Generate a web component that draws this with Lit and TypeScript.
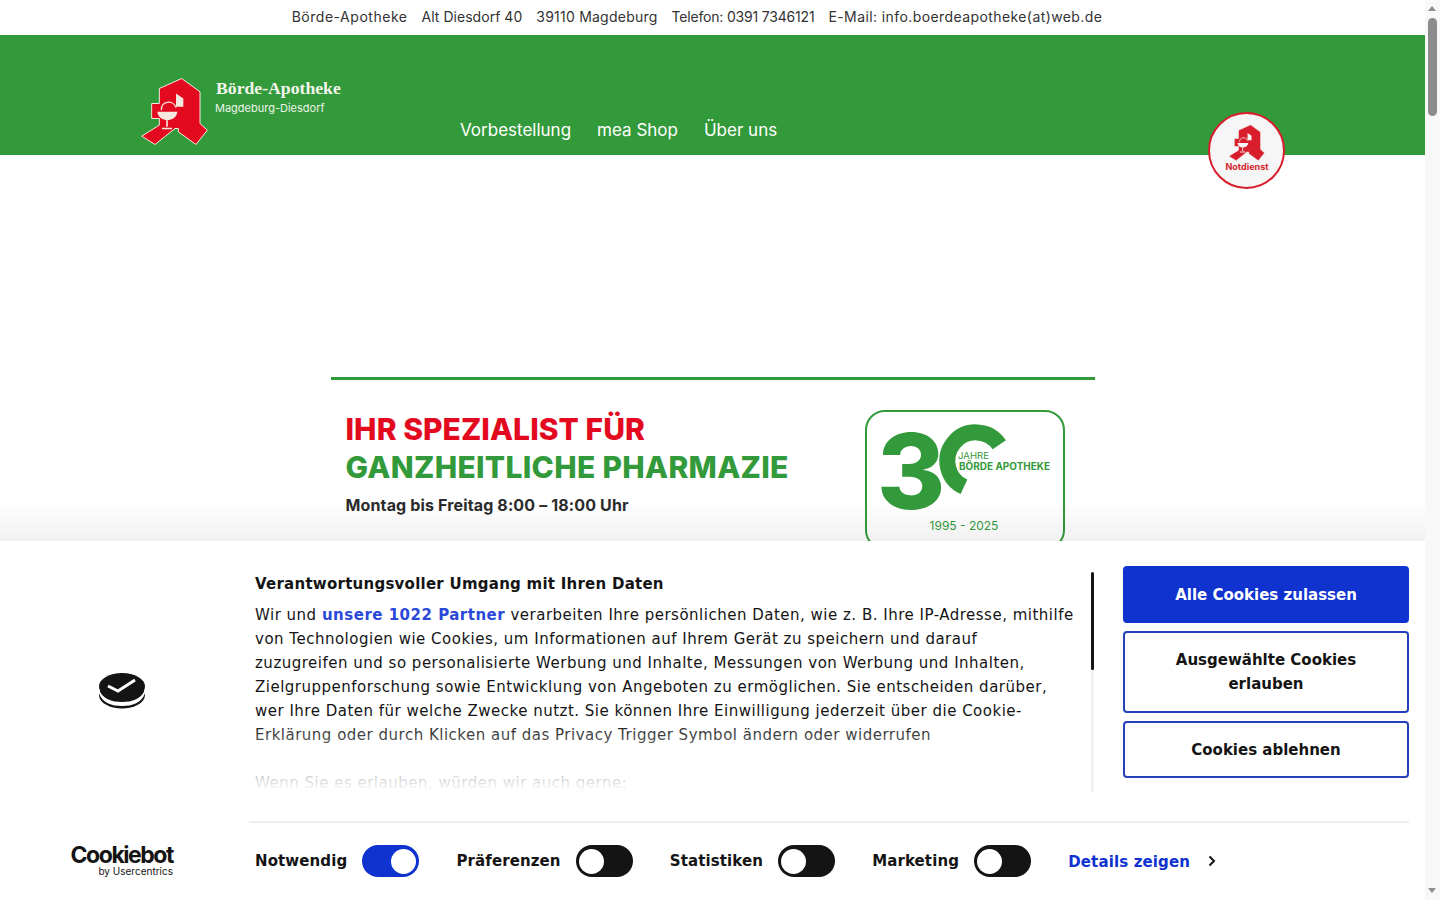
import { LitElement, html, css, svg } from "lit";
import { customElement } from "lit/decorators.js";

const aMark = (cross: string, edge: string) => svg`
  <path d="M185 55 L240 95 L240 190 L262 210 L228 253 L175 215 L175 205 L165 205 L105 253 L65 228 L118 195 L118 175 L95 175 L95 130 L118 130 L118 85 Z" fill="${cross}" stroke="${edge}" stroke-width="3" stroke-linejoin="round"/>
  <path d="M168 100 L190 115 L190 140 L168 140 Z" fill="${edge}"/>
  <path d="M112 155 H172 C170 172 156 180 142 180 C128 180 114 172 112 155 Z" fill="${edge}"/>
  <path d="M141 180 V200 M126 205 H156" stroke="${edge}" stroke-width="5" fill="none"/>
  <path d="M124 150 C122 122 160 118 168 142" stroke="${edge}" stroke-width="4" fill="none"/>
`;

@customElement("app-root")
export class AppRoot extends LitElement {
  static styles = css`
    :host { display: block; width: 1440px; height: 900px; overflow: hidden; position: relative; background: #fff; }
    .page { width: 1425px; height: 900px; font-family: Inter, "Liberation Sans", sans-serif; color: #333; position: relative; }
    .topbar { height: 35px; display: flex; justify-content: center; align-items: center; gap: 14px; font: 400 14px Inter, sans-serif; color: #333; padding: 0 31px 3px 0; box-sizing: border-box; white-space: nowrap; }
    .topbar span:nth-child(1) { letter-spacing: .53px; }
    .topbar span:nth-child(2) { letter-spacing: .03px; }
    .topbar span:nth-child(3) { letter-spacing: .23px; }
    .topbar span:nth-child(4) { letter-spacing: -.19px; }
    .topbar span:nth-child(5) { letter-spacing: .41px; }
    .band { height: 120px; background: #339a3b; position: relative; display: flex; }
    .logo { width: 70px; height: 72px; margin: 40px 0 0 140px; flex: none; }
    .logotext { color: #fff; margin: 43px 0 0 5px; width: 240px; flex: none; }
    .logotext b { display: block; font: 700 17.7px/20px "Liberation Serif", serif; color: #f4f4ec; margin-left: 1px; }
    .logotext span { display: block; font: 400 11px/16px Inter, sans-serif; margin-top: 2px; color: #eef3ea; }
    nav { display: flex; gap: 26px; margin: 83px 0 0 5px; font: 400 17px/24px Inter, sans-serif; color: #fff; height: 24px; }
    .notdienst { position: absolute; left: 1208px; top: 77px; width: 77px; height: 77px; box-sizing: border-box; border: 2px solid #d81e2c; border-radius: 50%; background: #f6f6f6; display: flex; flex-direction: column; align-items: center; padding-top: 9px; }
    .notdienst svg { width: 38px; height: 39px; flex: none; }
    .notdienst span { font: 700 9px/11px Inter, sans-serif; color: #d81e2c; margin: -1px 0 0 1px; }
    .content { width: 764px; margin: 222px 0 0 331px; border-top: 3px solid #339a3b; display: flex; position: relative; }
    .copy { width: 534px; padding: 30px 0 0 14.5px; box-sizing: border-box; }
    h1 { margin: 0; font: 800 30px/38px Inter, sans-serif; }
    h1 .r { color: #e30a1f; display: block; letter-spacing: .05px; }
    h1 .g { color: #339a3b; display: block; letter-spacing: .3px; }
    .hours { font: 700 16px/24px Inter, sans-serif; color: #2b2b2b; margin-top: 7px; letter-spacing: .14px; }
    .badge { margin: 30px 0 0 0; width: 200px; height: 140px; box-sizing: border-box; border: 2px solid #339a3b; border-radius: 20px; }
    .badge svg { display: block; }
    .fade { position: absolute; left: 0; right: 0; top: 500px; height: 41px; background: linear-gradient(to bottom, rgba(0,0,0,0), rgba(0,0,0,.055)); pointer-events: none; }

    .dialog { position: absolute; left: 0; top: 541px; width: 1425px; height: 359px; background: #fff; font-family: "DejaVu Sans", sans-serif; color: #141414; display: grid; grid-template-columns: 244px 1fr; }
    .brand { display: flex; align-items: center; justify-content: center; height: 299px; }
    .main { display: flex; flex-direction: column; padding-right: 16px; }
    .upper { display: flex; height: 280px; }
    .text { width: 838px; padding: 31px 0 0 11px; box-sizing: border-box; font-size: 15px; line-height: 24px; letter-spacing: .5px; height: 251px; overflow: hidden; position: relative; white-space: nowrap; }
    .text h2 { margin: 0 0 7px; font-size: 15px; line-height: 24px; font-weight: 700; letter-spacing: .25px; }
    .text p { margin: 0 0 24px; }
    .text a { color: #2a49d8; font-weight: 700; }
    .text::after { content: ""; position: absolute; left: 0; right: 0; bottom: 0; height: 70px; background: linear-gradient(to bottom, rgba(255,255,255,0), #fff); }
    .track { width: 3px; height: 220px; margin: 31px 0 0 9px; background: #f2f2f2; flex: none; }
    .thumb { width: 3px; height: 98px; background: #141414; border-radius: 2px; }
    .btns { width: 286px; margin: 24.7px 0 0 29px; display: flex; flex-direction: column; gap: 8px; flex: none; }
    .btn { box-sizing: border-box; border: 2px solid #2540b8; border-radius: 4px; font-size: 15px; line-height: 24px; font-weight: 700; text-align: center; padding: 15.25px 32px 14.25px; color: #141414; background: #fff; }
    .btn.on { background: #1032cf; border-color: #1032cf; color: #fff; }
    .controls { border-top: 2px solid #efefef; height: 77px; box-sizing: border-box; display: flex; align-items: center; padding: 1px 0 0 6px; font-size: 15px; letter-spacing: .1px; font-weight: 700; margin-left: 5px; }
    .opt { display: flex; align-items: center; gap: 15px; margin-right: 37.2px; }
    .sw { width: 57px; height: 32px; border-radius: 16px; background: #141414; position: relative; flex: none; }
    .sw::after { content: ""; position: absolute; left: 3px; top: 3.5px; width: 25px; height: 25px; border-radius: 50%; background: #fff; }
    .sw.on { background: #1032cf; }
    .sw.on::after { left: 29px; }
    .details { color: #1032cf; display: flex; align-items: center; gap: 18px; font-size: 15px; letter-spacing: .14px; }
    .details span { padding-top: 1px; }
    .cbot { position: absolute; left: 68px; top: 304px; width: 105px; color: #141414; text-align: right; }
    .cbot b { display: block; font: 700 23px/21px Inter, sans-serif; letter-spacing: -1.45px; white-space: nowrap; }
    .cbot span { display: block; font: 400 10px/11px Inter, sans-serif; }

    .scrollbar { position: absolute; right: 0; top: 0; width: 15px; height: 900px; background: #f8f8f8; }
    .thumbv { position: absolute; left: 3px; top: 18px; width: 9px; height: 98px; border-radius: 5px; background: #8c8c8c; }
    .up { position: absolute; left: 3px; top: 6px; border: 4.5px solid transparent; border-top: 0; border-bottom: 5px solid #8c8c8c; }
    .down { position: absolute; left: 3px; top: 888px; border: 4.5px solid transparent; border-bottom: 0; border-top: 5px solid #8c8c8c; }
  `;

  render() {
    return html`
      <div class="page">
        <div class="topbar">
          <span>Börde-Apotheke</span><span>Alt Diesdorf 40</span><span>39110 Magdeburg</span><span>Telefon: 0391 7346121</span><span>E-Mail: info.boerdeapotheke(at)web.de</span>
        </div>
        <div class="band">
          <svg class="logo" viewBox="60 45 210 215">${aMark("#e30a1f", "#f5e9df")}</svg>
          <div class="logotext"><b>Börde-Apotheke</b><span>Magdeburg-Diesdorf</span></div>
          <nav><span>Vorbestellung</span><span>mea Shop</span><span>Über uns</span></nav>
          <div class="notdienst">
            <svg viewBox="60 45 210 215">${aMark("#d81e2c", "#f6f6f6")}</svg>
            <span>Notdienst</span>
          </div>
        </div>
        <div class="content">
          <div class="copy">
            <h1><span class="r">IHR SPEZIALIST FÜR</span><span class="g">GANZHEITLICHE PHARMAZIE</span></h1>
            <div class="hours">Montag bis Freitag 8:00 – 18:00 Uhr</div>
          </div>
          <div class="badge">
            <svg width="196" height="136" viewBox="0 0 196 136">
              <text x="10" y="97" font-family="Inter" font-weight="800" font-size="104" fill="#339a3b">3</text>
              <path d="M132.3 32.7 A28.5 28.5 0 1 0 97 74.8" fill="none" stroke="#339a3b" stroke-width="16"/>
              <text x="91" y="47" font-family="Inter" font-size="9.5" fill="#339a3b" textLength="31" lengthAdjust="spacingAndGlyphs">JAHRE</text>
              <text x="92" y="58" font-family="Inter" font-weight="700" font-size="10" fill="#339a3b" textLength="91" lengthAdjust="spacingAndGlyphs">BÖRDE APOTHEKE</text>
              <text x="97" y="118" text-anchor="middle" font-family="Inter" font-size="12" fill="#339a3b">1995 - 2025</text>
            </svg>
          </div>
        </div>
        <div class="fade"></div>
        <div class="dialog">
          <div class="brand">
            <svg width="46" height="36" viewBox="0 0 46 36">
              <ellipse cx="23" cy="22" rx="23" ry="13.5" fill="#141414"/>
              <path d="M0 16 C3 26 13 29 23 29 C33 29 43 26 46 16 V20 C43 30 33 33 23 33 C13 33 3 30 0 20 Z" fill="#fff"/>
              <ellipse cx="23" cy="13.5" rx="23" ry="13.5" fill="#141414"/>
              <path d="M9 13 L19 18 L36 7" fill="none" stroke="#fff" stroke-width="3"/>
            </svg>
          </div>
          <div class="main">
            <div class="upper">
              <div class="text">
                <h2>Verantwortungsvoller Umgang mit Ihren Daten</h2>
                <p>Wir und <a>unsere 1022 Partner</a> verarbeiten Ihre persönlichen Daten, wie z. B. Ihre IP-Adresse, mithilfe<br>von Technologien wie Cookies, um Informationen auf Ihrem Gerät zu speichern und darauf<br>zuzugreifen und so personalisierte Werbung und Inhalte, Messungen von Werbung und Inhalten,<br>Zielgruppenforschung sowie Entwicklung von Angeboten zu ermöglichen. Sie entscheiden darüber,<br>wer Ihre Daten für welche Zwecke nutzt. Sie können Ihre Einwilligung jederzeit über die Cookie-<br>Erklärung oder durch Klicken auf das Privacy Trigger Symbol ändern oder widerrufen</p>
                <p>Wenn Sie es erlauben, würden wir auch gerne:</p>
              </div>
              <div class="track"><div class="thumb"></div></div>
              <div class="btns">
                <div class="btn on">Alle Cookies zulassen</div>
                <div class="btn">Ausgewählte Cookies erlauben</div>
                <div class="btn">Cookies ablehnen</div>
              </div>
            </div>
            <div class="controls">
              <div class="opt"><span>Notwendig</span><div class="sw on"></div></div>
              <div class="opt"><span>Präferenzen</span><div class="sw"></div></div>
              <div class="opt"><span>Statistiken</span><div class="sw"></div></div>
              <div class="opt"><span>Marketing</span><div class="sw"></div></div>
              <div class="details"><span>Details zeigen</span>
                <svg width="8" height="12" viewBox="0 0 8 12"><path d="M1.5 1.5 L6 6 L1.5 10.5" fill="none" stroke="#141414" stroke-width="2"/></svg>
              </div>
            </div>
          </div>
          <div class="cbot"><b>Cookiebot</b><span>by Usercentrics</span></div>
        </div>
      </div>
      <div class="scrollbar"><div class="up"></div><div class="thumbv"></div><div class="down"></div></div>
    `;
  }
}
